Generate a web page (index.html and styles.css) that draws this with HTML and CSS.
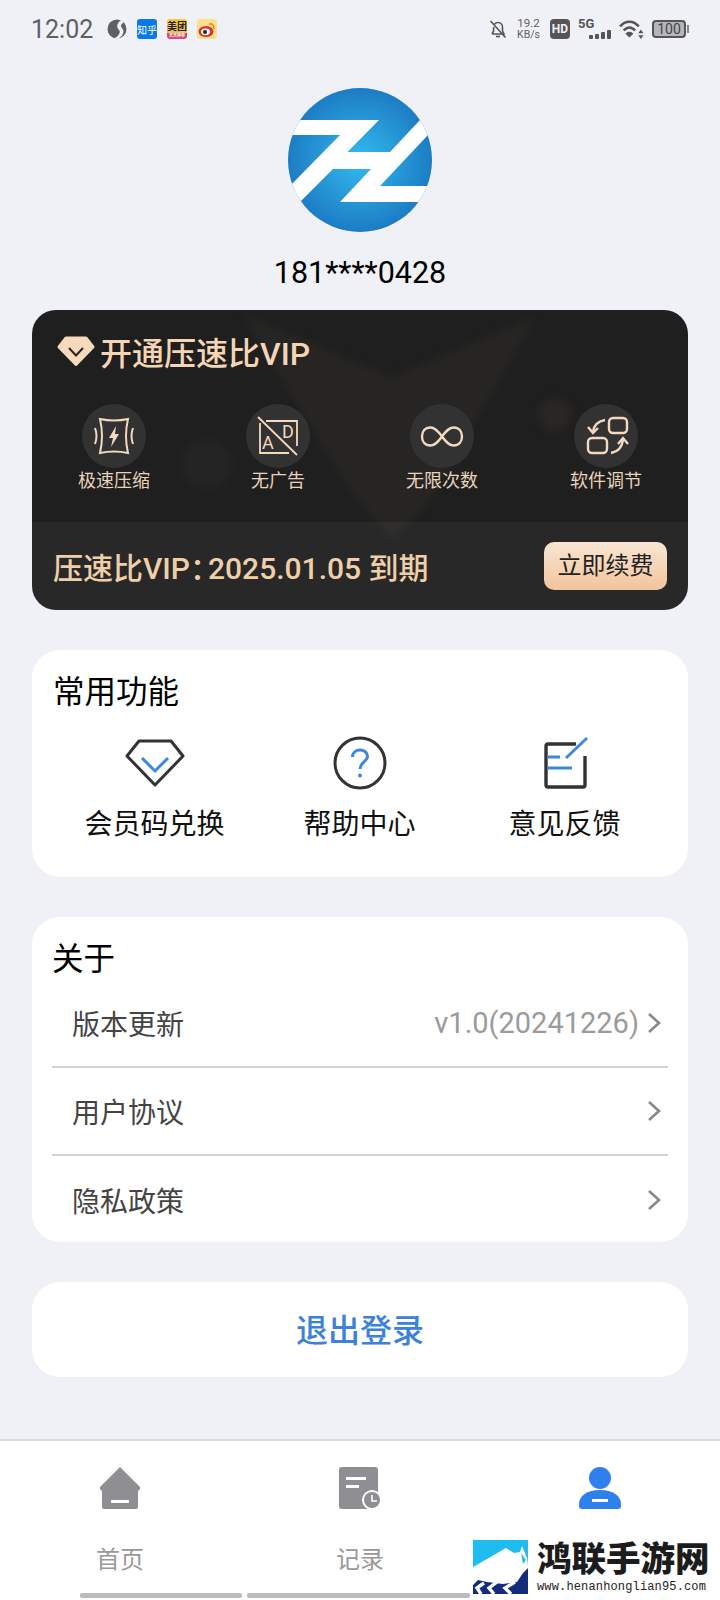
FILE: index.html
```html
<!DOCTYPE html>
<html lang="zh-CN">
<head>
  <title>压速比</title>
  <meta charset="utf-8">
  <link rel="stylesheet" href="styles.css">
</head>
<body>
  <div id="app">
    <div class="status">
      <div class="status-left">
        <span class="time">12:02</span>
        <svg class="sicon" width="20" height="20" viewBox="0 0 20 20"><circle cx="10" cy="10" r="9.5" fill="#5f5f66"/><path d="M14 1 C10 4 9 8 12 11 C14 13 12 17 7 19.5 L11 20 C16 17 18 12 15 9 C13 7 14 5 17 3.5Z" fill="#f0f1f6"/></svg>
        <span class="app-ico zhihu">知乎</span>
        <span class="app-ico meituan">美团<i>天天神券</i></span>
        <span class="app-ico weibo">
          <svg width="20" height="20" viewBox="0 0 20 20"><ellipse cx="9" cy="12.5" rx="7.5" ry="5.5" fill="#e0352b"/><ellipse cx="8.5" cy="12.8" rx="4.5" ry="3.4" fill="#fff"/><circle cx="8" cy="13" r="2" fill="#222"/><path d="M12 5 Q17 4 17 10" fill="none" stroke="#ee8a1c" stroke-width="1.6"/></svg>
        </span>
      </div>
      <div class="status-right">
        <svg width="18" height="19" viewBox="0 0 18 19" fill="none" stroke="#555" stroke-width="1.6"><path d="M3 14 H15 L13.5 11 V7.5 C13.5 4.5 11.5 2.5 9 2.5 C7.5 2.5 6.3 3.2 5.5 4.2 M4.6 7 V11 L3 14"/><path d="M7 16.5 H11"/><path d="M1.5 1 L16.5 17.5"/></svg>
        <div class="speed"><b>19.2</b><b class="unit">KB/s</b></div>
        <span class="hd">HD</span>
        <div class="signal">
          <span>5G</span>
          <div class="bars"><i class="b1"></i><i class="b2"></i><i class="b3"></i><i class="b4"></i></div>
        </div>
        <svg width="25" height="21" viewBox="0 0 24 20" fill="none" stroke="#555" stroke-width="2.4"><path d="M1 7 C6 1 14 1 19 7"/><path d="M4.5 11 C8 7 12 7 15.5 11"/><path d="M10 17 L7 14 C9 12.3 11 12.3 13 14Z" fill="#555" stroke-width="1"/><path d="M21 10 L23.5 13.5 H18.5Z M21 19 L18.5 15.5 H23.5Z" fill="#555" stroke="none"/></svg>
        <div class="battery"><span>100</span></div>
      </div>
    </div>

    <svg class="avatar" width="144" height="144" viewBox="0 0 144 144">
      <defs>
        <radialGradient id="logoBlue" cx="50%" cy="50%" r="55%">
          <stop offset="0" stop-color="#34bbee"/>
          <stop offset="1" stop-color="#1a76c0"/>
        </radialGradient>
        <clipPath id="logoClip"><circle cx="72" cy="72" r="72"/></clipPath>
      </defs>
      <circle cx="72" cy="72" r="72" fill="url(#logoBlue)"/>
      <polygon clip-path="url(#logoClip)" fill="#fff" points="0,32 91,32 59.5,64 102,64 132,32 146,32 146,47 140,47 92,98 146,98 146,114 52,114 83,81 45,81 12,114 0,114 0,100 52,47 0,47"/>
    </svg>
    <div class="phone">181****0428</div>

    <div class="vip">
      <svg class="vip-bg" width="656" height="300" viewBox="0 0 656 300">
        <polygon points="209,3 359,68 504,6 398,190 361,230 318,180" fill="#ffdcb4" opacity="0.035"/>
        <circle cx="175" cy="154" r="26" fill="#fff" opacity="0.025"/>
        <circle cx="523" cy="105" r="17" fill="#ffb070" opacity="0.05"/>
      </svg>
      <div class="vip-title">
        <svg width="38" height="30" viewBox="0 0 38 30"><polygon points="9,2 29,2 36,11 19,28.5 2,11" fill="#f6dabb" stroke="#f6dabb" stroke-width="3" stroke-linejoin="round"/><polyline points="12,12 19,19.5 26,12" fill="none" stroke="#2a2420" stroke-width="2"/></svg>
        <span>开通压速比VIP</span>
      </div>
      <div class="vip-features">
        <div class="feature">
          <div class="feature-ico">
            <svg width="64" height="64" viewBox="0 0 64 64" fill="none" stroke="#f3d9bf" stroke-width="2"><path d="M18 15 Q32 18 46 15 Q42 32 46 49 Q32 46 18 49 Q22 32 18 15Z"/><path d="M13 24 Q16 32 13 40"/><path d="M51 24 Q48 32 51 40"/><path d="M34 22 L27 34 H31 L29 43 L37 30 H33 Z" fill="#f3d9bf" stroke="none"/></svg>
          </div>
          <span>极速压缩</span>
        </div>
        <div class="feature">
          <div class="feature-ico">
            <svg width="64" height="64" viewBox="0 0 64 64" fill="none" stroke="#f3d9bf" stroke-width="1.8"><path d="M14 19 V49 H43"/><path d="M20 17 H51 V42"/><path d="M12 13 L51 51"/><text x="16" y="45" class="ad">A</text><text x="36" y="34" class="ad">D</text></svg>
          </div>
          <span>无广告</span>
        </div>
        <div class="feature">
          <div class="feature-ico">
            <svg width="64" height="64" viewBox="0 0 64 64" fill="none" stroke="#f3d9bf" stroke-width="2.4"><path d="M32 32.5 C28 27 24 23.5 20.5 23.5 C15 23.5 12 27.5 12 32.5 C12 37.5 15 41.5 20.5 41.5 C25 41.5 28 38 32 32.5 C36 27 39 23.5 43.5 23.5 C49 23.5 52 27.5 52 32.5 C52 37.5 49 41.5 43.5 41.5 C39 41.5 36 38 32 32.5Z"/></svg>
          </div>
          <span>无限次数</span>
        </div>
        <div class="feature">
          <div class="feature-ico">
            <svg width="64" height="64" viewBox="0 0 64 64" fill="none" stroke="#f3d9bf" stroke-width="2.4"><rect x="35" y="14" width="18" height="15" rx="4"/><rect x="14" y="34" width="19" height="15" rx="4"/><path d="M31 16 Q20 18 19 28"/><path d="M14 23 L19 29 L24 24"/><path d="M37 49 Q48 47 49 35"/><path d="M44 40 L49 34 L54 40"/></svg>
          </div>
          <span>软件调节</span>
        </div>
      </div>
      <div class="vip-foot">
        <span class="vip-date">压速比VIP<span class="colon">&#xFF1A;</span>2025.01.05 到期</span>
        <div class="renew">立即续费</div>
      </div>
    </div>

    <div class="card common">
      <h2 class="card-title">常用功能</h2>
      <div class="tools">
        <div class="tool">
          <div class="tool-ico">
            <svg width="60" height="48" viewBox="0 0 60 48" fill="none"><polygon points="14,2 46,2 58,17 30,46 2,17" stroke="#333" stroke-width="3" stroke-linejoin="round"/><polyline points="17,19 30,32 43,19" stroke="#3f87d9" stroke-width="3"/></svg>
          </div>
          <span>会员码兑换</span>
        </div>
        <div class="tool">
          <div class="tool-ico">
            <svg width="54" height="54" viewBox="0 0 54 54" fill="none"><circle cx="27" cy="27" r="25" stroke="#333" stroke-width="3"/><path d="M19.5 21 C19.5 16.5 23 14 27 14 C31 14 34.5 16.5 34.5 20.5 C34.5 25.5 27 26 27 33" stroke="#3f87d9" stroke-width="3"/><circle cx="27" cy="39.5" r="2" fill="#3f87d9"/></svg>
          </div>
          <span>帮助中心</span>
        </div>
        <div class="tool">
          <div class="tool-ico">
            <svg width="46" height="54" viewBox="0 0 46 54" fill="none"><path d="M34 8 H6 Q4 8 4 10 V49 Q4 51 6 51 H41 Q43 51 43 49 V20" stroke="#333" stroke-width="3.4"/><path d="M45 2 L24 22" stroke="#3f87d9" stroke-width="3"/><path d="M5 21 H18 M5 32 H30" stroke="#3f87d9" stroke-width="3"/></svg>
          </div>
          <span>意见反馈</span>
        </div>
      </div>
    </div>

    <div class="card about">
      <h2 class="card-title">关于</h2>
      <div class="row">
        <span>版本更新</span>
        <span class="version">v1.0(20241226)</span>
        <svg class="chev" width="14" height="22" viewBox="0 0 14 22" fill="none"><path d="M2 2 L12 11 L2 20" stroke="#888" stroke-width="2.6"/></svg>
      </div>
      <div class="row">
        <span>用户协议</span>
        <svg class="chev" width="14" height="22" viewBox="0 0 14 22" fill="none"><path d="M2 2 L12 11 L2 20" stroke="#888" stroke-width="2.6"/></svg>
      </div>
      <div class="row">
        <span>隐私政策</span>
        <svg class="chev" width="14" height="22" viewBox="0 0 14 22" fill="none"><path d="M2 2 L12 11 L2 20" stroke="#888" stroke-width="2.6"/></svg>
      </div>
    </div>

    <div class="card logout">退出登录</div>

    <div class="tabbar">
      <div class="tabs">
        <div class="tab">
          <svg width="42" height="42" viewBox="0 0 42 42"><path d="M21 0 L41 20 Q42 22 39 24 V40 Q39 42 37 42 H5 Q3 42 3 40 V24 Q0 22 1 20 Z" fill="#8e8e93"/><rect x="12" y="33" width="18" height="3" fill="#fff"/></svg>
          <span>首页</span>
        </div>
        <div class="tab">
          <svg width="42" height="42" viewBox="0 0 42 42"><rect x="0" y="0" width="39" height="42" rx="3" fill="#8e8e93"/><rect x="7" y="10" width="20" height="3" fill="#fff"/><rect x="7" y="18" width="13" height="3" fill="#fff"/><circle cx="33" cy="33" r="10" fill="#fff"/><circle cx="33" cy="33" r="8" fill="#8e8e93"/><path d="M33 28 V34 H38" fill="none" stroke="#fff" stroke-width="1.6"/></svg>
          <span>记录</span>
        </div>
        <div class="tab">
          <svg width="42" height="42" viewBox="0 0 42 42"><ellipse cx="21" cy="11" rx="11" ry="11" fill="#2f80ed"/><path d="M0 37 C0 29 8 23 21 23 C34 23 42 29 42 37 V39 Q42 42 39 42 H3 Q0 42 0 39Z" fill="#2f80ed"/><rect x="13" y="32" width="16" height="3" fill="#fff"/></svg>
        </div>
      </div>
      <div class="homebar"><i class="seg1"></i><i class="seg2"></i></div>
    </div>

    <div class="watermark">
      <svg width="55" height="54" viewBox="0 0 55 54">
        <rect width="55" height="54" fill="#1ebcf0"/>
        <path d="M0 27 L33 8 L41 13 L47 12 L49 6 L54 18 L55 26 V54 H0Z" fill="#fff"/>
        <path d="M48 13 L50 24 L53 20Z" fill="#1ebcf0"/>
        <path d="M0 45 L5 40 L14 42 L30 44 L44 42 L50 33 L55 28 V54 H0Z" fill="#142c7c"/>
        <path d="M11 43 L4 48 L8 54 M24 42 L16 48 L21 54 M42 42 L32 48 L38 54" fill="none" stroke="#fff" stroke-width="3.4"/>
      </svg>
      <div class="wm-text">
        <div class="wm-name">鸿联手游网</div>
        <div class="wm-url">www.henanhonglian95.com</div>
      </div>
    </div>
  </div>
</body>
</html>
```
FILE: styles.css
```css
body {
  margin: 0;
  background-color: #f0f1f6;
  font-family: Roboto, "Noto Sans CJK SC", sans-serif;
  color: #000;
}
#app {
  position: relative;
  width: 720px;
  height: 1600px;
  overflow: hidden;
  display: flex;
  flex-direction: column;
}

/* status bar */
.status {
  height: 58px;
  padding: 0 34px 0 31px;
  display: flex;
  justify-content: space-between;
  align-items: center;
  flex-shrink: 0;
}
.status-left, .status-right {
  display: flex;
  align-items: center;
}
.time {
  font-size: 25px;
  color: #5f5f66;
  width: 76px;
}
.app-ico {
  width: 20px;
  height: 20px;
  margin-left: 10px;
  border-radius: 3px;
  overflow: hidden;
  display: flex;
  align-items: center;
  justify-content: center;
  font-size: 10px;
}
.zhihu {
  background-color: #0a78e8;
  color: #fff;
}
.meituan {
  flex-direction: column;
  background: linear-gradient(#f5c842 0 68%, #d9457e 68%);
  color: #222;
  font-weight: 700;
  line-height: 13px;
}
.meituan i {
  font-style: normal;
  font-size: 4px;
  line-height: 6px;
  color: #ffe;
  white-space: nowrap;
}
.weibo {
  background-color: #fddf8c;
}
.status-right {
  gap: 8px;
}
.speed {
  display: flex;
  flex-direction: column;
  align-items: center;
  width: 27px;
  color: #5f5f66;
}
.speed b {
  font-weight: 400;
  font-size: 11.5px;
  line-height: 11px;
}
.speed .unit {
  font-size: 10.5px;
}
.hd {
  width: 20px;
  height: 20px;
  border-radius: 4px;
  background-color: #555;
  color: #f0f1f6;
  font-size: 12px;
  font-weight: 700;
  text-align: center;
  line-height: 20px;
}
.signal {
  position: relative;
  width: 33px;
  height: 20px;
}
.signal span {
  font-size: 13px;
  font-weight: 700;
  color: #555;
  line-height: 10px;
  display: block;
}
.bars {
  position: absolute;
  right: 0;
  bottom: 0;
  display: flex;
  align-items: flex-end;
  gap: 2px;
}
.bars i {
  width: 4px;
  background-color: #555;
  border-radius: 1px;
}
.b1 { height: 4px; }
.b2 { height: 5px; }
.b3 { height: 7px; }
.b4 { height: 9px; }
.battery {
  position: relative;
  width: 34px;
  height: 18px;
  box-sizing: border-box;
  border: 2px solid #555;
  border-radius: 4px;
  background-color: #b5b5ba;
  text-align: center;
}
.battery span {
  font-size: 14px;
  line-height: 14px;
  color: #444;
  display: block;
}
.battery::after {
  content: "";
  position: absolute;
  right: -5px;
  top: 3px;
  width: 2px;
  height: 8px;
  background-color: #888;
}

/* account */
.avatar {
  align-self: center;
  margin-top: 30px;
  flex-shrink: 0;
}
.phone {
  height: 40px;
  margin: 21px 0 17px;
  text-align: center;
  font-size: 30.5px;
  line-height: 40px;
  flex-shrink: 0;
}

/* vip card */
.vip {
  position: relative;
  height: 300px;
  margin: 0 32px;
  border-radius: 24px;
  overflow: hidden;
  background-color: #1f1f1f;
  display: flex;
  flex-direction: column;
  flex-shrink: 0;
}
.vip-bg {
  position: absolute;
  left: 0;
  top: 0;
  filter: blur(5px);
}
.vip-title {
  position: relative;
  margin: 21px 0 0 25px;
  height: 40px;
  display: flex;
  align-items: center;
  gap: 5px;
  font-size: 32px;
  font-weight: 500;
  color: #f5d5b5;
}
.vip-features {
  position: relative;
  margin-top: 33px;
  display: grid;
  grid-template-columns: repeat(4, 1fr);
}
.feature {
  display: flex;
  flex-direction: column;
  align-items: center;
  gap: 1px;
  font-size: 18px;
  line-height: 24px;
  color: #e8d3bc;
}
.feature-ico {
  width: 64px;
  height: 64px;
  border-radius: 50%;
  background-color: #323232;
}
.feature-ico svg {
  display: block;
}
.ad {
  font-family: Roboto, sans-serif;
  font-size: 18px;
  fill: #f3d9bf;
  stroke: none;
}
.vip-foot {
  position: relative;
  margin-top: auto;
  height: 88px;
  padding: 0 21px;
  display: flex;
  align-items: center;
  justify-content: space-between;
  background-color: rgba(255, 255, 255, 0.045);
}
.vip-date {
  font-size: 30px;
  font-weight: 500;
  color: #f0cfa8;
  white-space: pre;
}
.colon {
  letter-spacing: -12px;
}
.renew {
  width: 123px;
  height: 48px;
  border-radius: 10px;
  background: linear-gradient(#fae6d3, #f2c49c);
  color: #222;
  font-size: 24px;
  line-height: 48px;
  text-align: center;
}

/* white cards */
.card {
  margin: 0 32px;
  background-color: #fff;
  border-radius: 28px;
  flex-shrink: 0;
}
.card-title {
  margin: 0;
  font-size: 31.5px;
  font-weight: 400;
  line-height: 40px;
}
.common {
  margin-top: 40px;
  height: 227px;
  padding: 23px 21px 0;
  box-sizing: border-box;
}
.tools {
  margin: 23px 0 0 -1px;
  display: grid;
  grid-template-columns: repeat(3, 1fr);
}
.tool {
  display: flex;
  flex-direction: column;
  align-items: center;
  gap: 15px;
  font-size: 28px;
  line-height: 40px;
  color: #111;
}
.tool-ico {
  height: 54px;
  display: flex;
  align-items: center;
}
.about {
  margin-top: 40px;
  height: 325px;
  padding: 23px 20px 0;
  box-sizing: border-box;
}
.row {
  height: 88px;
  box-sizing: border-box;
  padding: 0 7px 0 20px;
  display: flex;
  align-items: center;
  font-size: 28px;
  color: #444;
  border-bottom: 2px solid #d2d2d2;
}
.row:last-child {
  border-bottom: none;
}
.version {
  margin-left: auto;
  color: #9b9b9b;
  font-size: 29px;
  margin-right: 8px;
}
.chev {
  margin-left: auto;
}
.version + .chev {
  margin-left: 0;
}
.logout {
  margin-top: 40px;
  height: 95px;
  text-align: center;
  line-height: 99px;
  font-size: 32px;
  font-weight: 500;
  color: #3b82d8;
}

/* bottom tabs */
.tabbar {
  margin-top: auto;
  height: 161px;
  box-sizing: border-box;
  background-color: #fff;
  border-top: 2px solid #dcdcdc;
  display: flex;
  flex-direction: column;
}
.tabs {
  display: grid;
  grid-template-columns: repeat(3, 1fr);
  padding-top: 26px;
}
.tab {
  display: flex;
  flex-direction: column;
  align-items: center;
  gap: 37px;
  font-size: 24px;
  line-height: 28px;
  color: #999;
}
.tab svg {
  display: block;
}
.homebar {
  display: flex;
  gap: 5px;
  margin: 19px 0 0 80px;
}
.homebar i {
  height: 5px;
  background-color: #bcbcbc;
  border-radius: 2px;
}
.seg1 { width: 162px; }
.seg2 { width: 223px; }

/* site watermark over the corner */
.watermark {
  position: absolute;
  left: 473px;
  top: 1540px;
  display: flex;
  gap: 9px;
}
.wm-text {
  width: 174px;
}
.wm-name {
  font-size: 34.5px;
  font-weight: 900;
  line-height: 39px;
  color: #1c1c1c;
  white-space: nowrap;
}
.wm-url {
  font-family: "Liberation Mono", monospace;
  font-size: 12px;
  letter-spacing: 0.15px;
  line-height: 16px;
  color: #222;
  white-space: nowrap;
}
```
